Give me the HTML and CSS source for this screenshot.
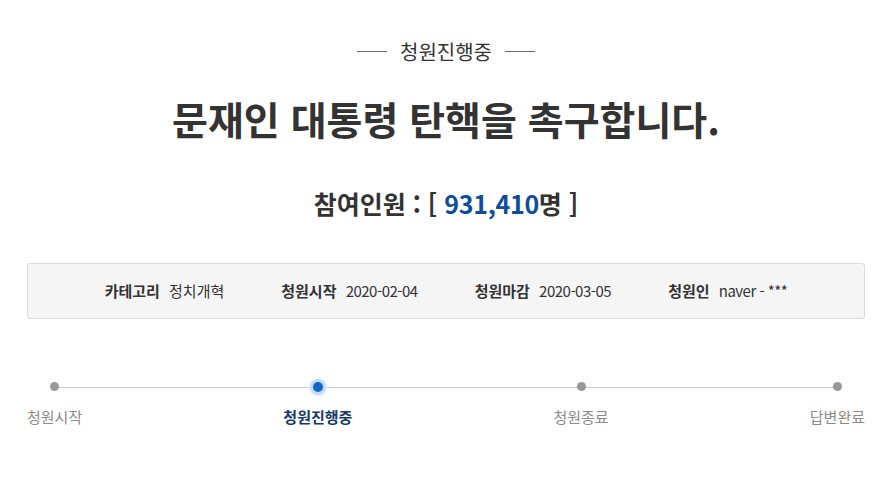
FILE: index.html
```html
<!DOCTYPE html>
<html lang="ko">
<head>
    <meta charset="UTF-8">
    <meta name="viewport" content="width=device-width, initial-scale=1.0">
    <title>청원진행중</title>

    <link rel="stylesheet" href="styles.css">
</head>
<body>
    <div class="petition">
        <p class="status"><span>청원진행중</span></p>
        <h1 class="title">문재인 대통령 탄핵을 촉구합니다.</h1>
        <h2 class="count">참여인원 : [ <span class="num">931,410</span>명 ]</h2>

        <ul class="info">
            <li><b>카테고리</b> 정치개혁</li>
            <li><b>청원시작</b> <span class="latin">2020-02-04</span></li>
            <li><b>청원마감</b> <span class="latin">2020-03-05</span></li>
            <li><b>청원인</b> <span class="latin">naver - ***</span></li>
        </ul>

        <ol class="steps">
            <li class="step"><i class="dot"></i><span>청원시작</span></li>
            <li class="step active"><i class="dot"></i><span>청원진행중</span></li>
            <li class="step"><i class="dot"></i><span>청원종료</span></li>
            <li class="step"><i class="dot"></i><span>답변완료</span></li>
        </ol>
    </div>
</body>
</html>
```

FILE: styles.css
```css
* {
    font-family: "Noto Sans CJK KR", "Noto Sans", sans-serif;
    box-sizing: border-box;
}

body {
    margin: 0;
    background: #fff;
    color: #333;
}

.petition {
    padding: 31px 27px 0;
}

.status {
    margin: 0;
    text-align: center;
    font-size: 20px;
    line-height: 26px;
    color: #333;
}

.status span {
    display: inline-flex;
    align-items: center;
    gap: 13px;
}

.status span::before,
.status span::after {
    content: "";
    width: 30px;
    height: 1px;
    background: #666;
}

.title {
    margin: 28px 0 0;
    text-align: center;
    font-size: 39px;
    line-height: 50px;
    font-weight: 700;
    color: #333;
}

.count {
    margin: 44px 0 0;
    text-align: center;
    font-size: 25px;
    line-height: 32px;
    font-weight: 700;
    color: #333;
}

.count .num {
    color: #0d4c9f;
    letter-spacing: -0.3px;
}

.info {
    margin: 44px 0 0;
    padding: 16px 0;
    list-style: none;
    display: flex;
    justify-content: center;
    gap: 57px;
    background: #f5f5f5;
    border: 1px solid #d9d9d9;
    border-radius: 3px;
    font-size: 15px;
    line-height: 22px;
    color: #333;
}

.info b {
    margin-right: 5px;
}

.info .latin {
    letter-spacing: -0.5px;
}

.steps {
    position: relative;
    margin: 58px 0 0;
    padding: 0;
    list-style: none;
    display: flex;
    justify-content: space-between;
}

.steps::before {
    content: "";
    position: absolute;
    left: 28px;
    right: 28px;
    top: 10px;
    height: 1px;
    background: #c8c8c8;
}

.step {
    position: relative;
    display: flex;
    flex-direction: column;
    align-items: center;
    gap: 9px;
    font-size: 15px;
    line-height: 22px;
    color: #8a8a8a;
}

.dot {
    width: 20px;
    height: 20px;
    display: flex;
    align-items: center;
    justify-content: center;
}

.dot::after {
    content: "";
    width: 9px;
    height: 9px;
    border-radius: 50%;
    background: #999;
}

.step.active {
    color: #15396a;
    font-weight: 700;
}

.step.active .dot::after {
    width: 10px;
    height: 10px;
    background: #1565c8;
    box-shadow: 0 0 0 3px #c2dcf7, 0 0 3px 4px #deecfb;
}
```
